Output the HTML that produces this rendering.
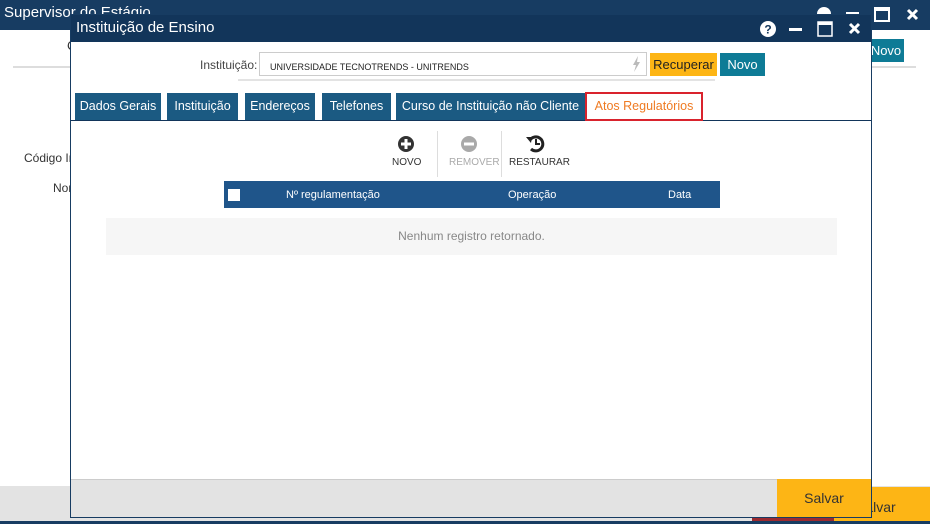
<!DOCTYPE html>
<html><head><meta charset="utf-8"><style>
*{margin:0;padding:0;box-sizing:border-box}
body{width:930px;height:524px;position:relative;overflow:hidden;background:#fff;font-family:"Liberation Sans",sans-serif;font-size:13px;color:#333}
.abs{position:absolute}
.tab{position:absolute;top:78px;height:27px;background:#1b5a82;color:#fff;line-height:27px;text-align:center;font-size:12.5px}
</style></head><body>
<!-- background window -->
<div class="abs" style="left:0;top:0;width:930px;height:30px;background:#173c62"></div>
<div class="abs" style="left:4px;top:4px;color:#fff;font-size:15px">Supervisor do Estágio</div>
<svg class="abs" style="left:810px;top:4px" width="60" height="12"><circle cx="14" cy="10" r="7" fill="#fff"/><rect x="36" y="8" width="13" height="3" fill="#fff"/></svg>
<div class="abs" style="left:67px;top:38px;font-size:13px">C</div>
<div class="abs" style="left:13px;top:66px;width:60px;height:2px;background:#ddd"></div>
<div class="abs" style="left:24px;top:151px;font-size:12px">Código In</div>
<div class="abs" style="left:53px;top:181px;font-size:12px">Nor</div>
<div class="abs" style="left:868px;top:39px;width:36px;height:23px;background:#0e7b96;color:#fff;font-size:13px;line-height:23px;text-align:center">Novo</div>
<div class="abs" style="left:872px;top:66px;width:44px;height:2px;background:#ddd"></div>
<svg class="abs" style="left:872px;top:6px" width="58" height="18"><rect x="3" y="2" width="14" height="13" fill="none" stroke="#fff" stroke-width="2"/><rect x="3" y="2" width="14" height="3" fill="#fff"/><path d="M36 4l9 9M45 4l-9 9" stroke="#fff" stroke-width="3"/></svg>
<div class="abs" style="left:0;top:486px;width:930px;height:36px;background:#e3e3e3"></div>
<div class="abs" style="left:752px;top:514px;width:84px;height:10px;background:#9b2a30"></div>
<div class="abs" style="left:834px;top:487px;width:96px;height:37px;background:#fdb515;color:#333;font-size:14px;line-height:40px;padding-left:22px">Salvar</div>
<div class="abs" style="left:0;top:521px;width:930px;height:3px;background:#173c62"></div>

<!-- modal -->
<div class="abs" style="left:70px;top:14px;width:802px;height:504px;background:#fff;border:1px solid #173c62">
  <div class="abs" style="left:0;top:0;width:800px;height:27px;background:#12355a"></div>
  <div class="abs" style="left:5px;top:4px;color:#fff;font-size:15px">Instituição de Ensino</div>
  <svg class="abs" style="left:688px;top:4px" width="108" height="20">
    <circle cx="9" cy="10" r="8" fill="#fff"/><text x="9" y="14.5" font-size="12" font-weight="bold" text-anchor="middle" fill="#12355a" font-family="Liberation Sans">?</text>
    <rect x="30" y="9" width="13" height="3" fill="#fff"/>
    <rect x="59" y="3" width="14" height="14" fill="none" stroke="#fff" stroke-width="1.5"/><rect x="59" y="3" width="14" height="3" fill="#fff"/>
    <path d="M91 5l9 9M100 5l-9 9" stroke="#fff" stroke-width="3"/>
  </svg>
  <div class="abs" style="left:129px;top:43px;font-size:12px;color:#444">Instituição:</div>
  <div class="abs" style="left:188px;top:37px;width:388px;height:24px;border:1px solid #ccc;font-size:9px;padding:9px 0 0 10px;color:#222">UNIVERSIDADE TECNOTRENDS - UNITRENDS</div>
  <svg class="abs" style="left:561px;top:41px" width="10" height="16"><path d="M6 0L1 9h3l-2 7 6-10H5z" fill="#bbb"/></svg>
  <div class="abs" style="left:167px;top:64px;width:477px;height:2px;background:#e3e3e3"></div>
  <div class="abs" style="left:579px;top:38px;width:67px;height:23px;background:#fdb515;font-size:13px;line-height:23px;text-align:center;color:#222">Recuperar</div>
  <div class="abs" style="left:649px;top:38px;width:45px;height:23px;background:#0e7b96;color:#fff;font-size:13px;line-height:23px;text-align:center">Novo</div>
  <!-- tabs -->
  <div class="abs" style="left:0;top:105px;width:800px;height:1px;background:#12355a"></div>
  <div class="tab" style="left:4px;width:86px">Dados Gerais</div>
  <div class="tab" style="left:96px;width:71px">Instituição</div>
  <div class="tab" style="left:174px;width:70px">Endereços</div>
  <div class="tab" style="left:251px;width:69px">Telefones</div>
  <div class="tab" style="left:325px;width:189px">Curso de Instituição não Cliente</div>
  <div class="abs" style="left:514px;top:77px;width:118px;height:29px;background:#fff;border:2px solid #d9232d;color:#ef7b23;line-height:25px;text-align:center;font-size:12.5px">Atos Regulatórios</div>
  <!-- toolbar -->
  <svg class="abs" style="left:325px;top:119px" width="20" height="20"><circle cx="10" cy="10" r="8" fill="#333"/><path d="M10 5v10M5 10h10" stroke="#fff" stroke-width="3"/></svg>
  <div class="abs" style="left:321px;top:142px;font-size:10px;color:#333">NOVO</div>
  <div class="abs" style="left:366px;top:116px;width:1px;height:46px;background:#ddd"></div>
  <svg class="abs" style="left:388px;top:119px" width="20" height="20"><circle cx="10" cy="10" r="8" fill="#a9a9a9"/><path d="M5 10h10" stroke="#fff" stroke-width="3"/></svg>
  <div class="abs" style="left:378px;top:142px;font-size:10px;color:#aaa">REMOVER</div>
  <div class="abs" style="left:430px;top:116px;width:1px;height:46px;background:#ddd"></div>
  <svg class="abs" style="left:454px;top:118px" width="22" height="22"><path d="M5 7A7 7 0 1 1 6 16" fill="none" stroke="#222" stroke-width="3"/><path d="M1 4l6 0 -1 6z" fill="#222"/><path d="M11 6v5h4" fill="none" stroke="#222" stroke-width="2"/></svg>
  <div class="abs" style="left:438px;top:142px;font-size:10px;color:#333">RESTAURAR</div>
  <!-- table header -->
  <div class="abs" style="left:153px;top:166px;width:496px;height:27px;background:#1f558a;color:#fff;font-size:11px">
    <div class="abs" style="left:4px;top:8px;width:12px;height:12px;background:#fff"></div>
    <div class="abs" style="left:62px;top:8px">Nº regulamentação</div>
    <div class="abs" style="left:284px;top:8px">Operação</div>
    <div class="abs" style="left:444px;top:8px">Data</div>
  </div>
  <div class="abs" style="left:35px;top:203px;width:731px;height:37px;background:#f6f6f6;color:#888;font-size:12px;line-height:37px;text-align:center">Nenhum registro retornado.</div>
  <!-- footer -->
  <div class="abs" style="left:0;top:464px;width:800px;height:38px;background:#e3e3e3;border-top:1px solid #ccc"></div>
  <div class="abs" style="left:706px;top:464px;width:94px;height:38px;background:#fdb515;color:#333;font-size:14px;line-height:38px;text-align:center">Salvar</div>
</div>
</body></html>
